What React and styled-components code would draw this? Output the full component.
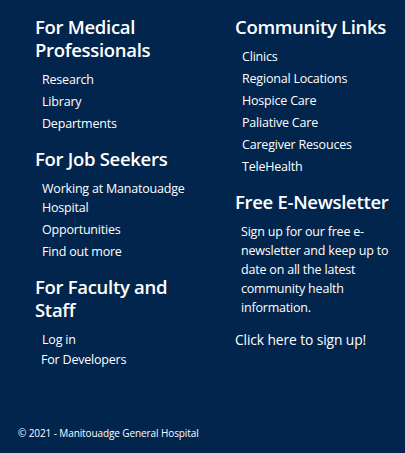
import React from "react";
import styled, { createGlobalStyle } from "styled-components";

const Global = createGlobalStyle`
  html, body { margin: 0; padding: 0; background: #02254d; }
  body { font-family: "Open Sans", "Noto Sans", sans-serif; color: #ffffff; }
`;

const Footer = styled.footer`
  min-height: 453px;
  box-sizing: border-box;
  background: #02254d;
  display: flex;
  flex-direction: column;
  padding: 16px 0 0 0;
`;

const Columns = styled.div`
  display: grid;
  grid-template-columns: 165px 162px;
  column-gap: 35px;
  padding-left: 35px;
  flex: 1;
`;

const Column = styled.div`
  display: flex;
  flex-direction: column;
`;

const Section = styled.section`
  margin-bottom: 15px;
`;

const Heading = styled.h2`
  margin: -1px 0 9px 0;
  font-size: 18.5px;
  letter-spacing: -0.3px;
  line-height: 23px;
  font-weight: 600;
  color: #ffffff;
`;

const List = styled.ul`
  list-style: none;
  margin: 0;
  padding: 0 0 0 7px;
  display: flex;
  flex-direction: column;
  gap: ${(p) => p.$gap ?? 3}px;
`;

const Item = styled.li`
  font-size: 12.5px;
  letter-spacing: -0.2px;
  line-height: 19px;
  margin-left: ${(p) => p.$shift ?? 0}px;
`;

const Link = styled.a`
  color: #ffffff;
  text-decoration: none;
`;

const Blurb = styled.p`
  margin: 0 0 11px 6px;
  font-size: 12.5px;
  letter-spacing: -0.2px;
  line-height: 19px;
`;

const SignUp = styled.a`
  color: #ffffff;
  text-decoration: none;
  font-size: 13.8px;
  letter-spacing: -0.1px;
  line-height: 22px;
`;

const Copyright = styled.div`
  padding: 0 0 13px 18px;
  font-size: 10px;
  letter-spacing: -0.1px;
  line-height: 14px;
`;

const LinkSection = ({ title, items, gap, shifts = {} }) => (
  <Section>
    <Heading>{title}</Heading>
    <List $gap={gap}>
      {items.map((t, i) => (
        <Item key={t} $shift={shifts[i]}>
          <Link href="#">{t}</Link>
        </Item>
      ))}
    </List>
  </Section>
);

export default function App() {
  return (
    <>
      <Global />
      <Footer>
        <Columns>
          <Column>
            <LinkSection
              title="For Medical Professionals"
              items={["Research", "Library", "Departments"]}
            />
            <LinkSection
              title="For Job Seekers"
              items={["Working at Manatouadge Hospital", "Opportunities", "Find out more"]}
            />
            <LinkSection
              title="For Faculty and Staff"
              items={["Log in", "For Developers"]}
              gap={1}
              shifts={{ 1: -1 }}
            />
          </Column>
          <Column>
            <LinkSection
              title="Community Links"
              items={[
                "Clinics",
                "Regional Locations",
                "Hospice Care",
                "Paliative Care",
                "Caregiver Resouces",
                "TeleHealth",
              ]}
            />
            <Section>
              <Heading>Free E-Newsletter</Heading>
              <Blurb>
                Sign up for our free e-newsletter and keep up to date on all the latest community health information.
              </Blurb>
              <SignUp href="#">Click here to sign up!</SignUp>
            </Section>
          </Column>
        </Columns>
        <Copyright>© 2021 - Manitouadge General Hospital</Copyright>
      </Footer>
    </>
  );
}
